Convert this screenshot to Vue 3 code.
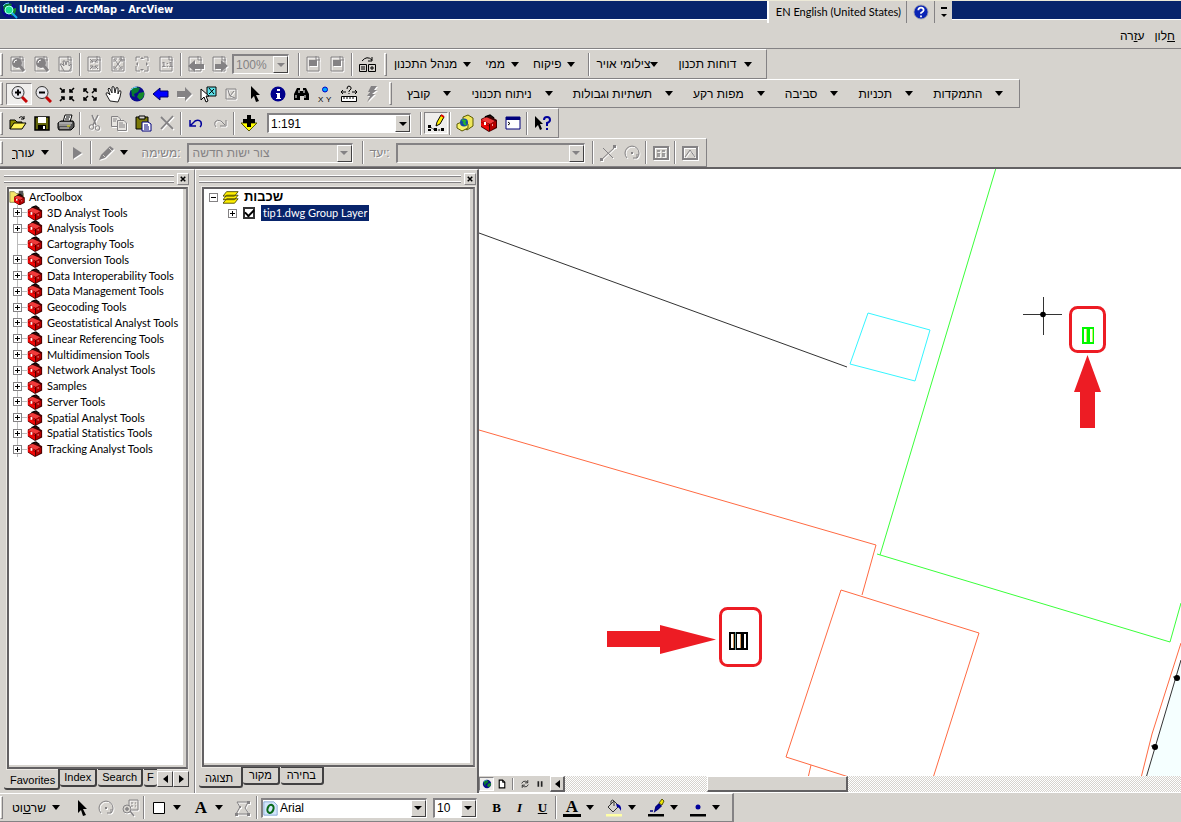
<script setup>
import { ref } from 'vue'

const page = '<path d="M2 2H14V16H2Z" fill="none" stroke="#848284"/><path d="M11 1V5H15" fill="none" stroke="#848284"/>'
const toolbox = '<path d="M1 5L9 1L17 6V14L9 18L1 13Z" fill="#420000"/><path d="M1 6L6 3L15 7L10 10Z" fill="#f03a3a"/><path d="M1 6L9 10V17L1 12Z" fill="#f00808"/><path d="M10 10L16 7V13L10 17Z" fill="#b50000"/><path d="M5 3L10 1L14 4" fill="none" stroke="#000" stroke-width="1.5"/><path d="M1 8L9 12" stroke="#a00000" fill="none"/><path d="M4 8H6V11H4Z" fill="#fff"/><path d="M12 10H13V12H12Z" fill="#f0a0a0"/>'
const globe = '<circle cx="9" cy="9" r="7.5" fill="#0a0a8c"/><path d="M3 4Q8 1 12 3L10 7L6 9L7 12L4 11Z" fill="#087a30"/><path d="M11 8L16 7Q17 12 12 15L9 12Z" fill="#148a28"/><path d="M3 5Q5 2 9 2" stroke="#6ad0ff" fill="none"/>'
const lens = (s) => `<circle cx="8" cy="7.5" r="6" fill="#e8e8ec" stroke="#333"/><path d="M5 7.5H11${s}" stroke="#000" stroke-width="2"/><path d="M12 12L17 17" stroke="#c60808" stroke-width="3"/>`
const pageLens = page + '<circle cx="8" cy="8" r="5" fill="#848284"/><path d="M5 8Q5 5 8 5" stroke="#fff" fill="none"/><path d="M11 11L15 16" stroke="#848284" stroke-width="3"/>'
const hand = '<path d="M5 16L1 9Q1 7 3 8L5 10L3 4Q4 2 5 4L7 8L7 2Q8 1 9 2L10 8L11 3Q12 2 13 3L13 9L14 6Q16 5 16 7L15 12L13 17Z" fill="#fff" stroke="#222"/>'

const icons = {
  pageLens,
  pageHand: page + '<path d="M6 14L3 9L5 9L7 11L6 6L8 6L9 10L10 6L12 7V11L14 9V13L12 16H7Z" fill="#e8e6e2" stroke="#848284"/>',
  pageIn: page + '<path d="M4 4L7 7M12 4L9 7M4 14L7 11M12 14L9 11M7 4V7H4M9 4V7H12M7 14V11H4M9 14V11H12" stroke="#848284" fill="none"/>',
  pageOut: page + '<path d="M5 5L11 13M11 5L5 13M4 7V4H7M9 4H12V7M4 11V14H7M9 14H12V11" stroke="#848284" fill="none"/>',
  pageAll: '<path d="M2 6V2H6M10 2H14V6M14 11V16H10M6 16H2V11" stroke="#848284" fill="none"/><path d="M8 2L6 4H10ZM8 16L6 14H10ZM2 9L4 7V11ZM14 9L12 7V11Z" fill="#848284"/>',
  page11: page + '<text x="3.5" y="12" font-size="8" font-weight="bold" font-family="Liberation Sans, sans-serif" fill="#848284">1:1</text>',
  pagePrev: page + '<path d="M1 11L8 5V9H17V14H8V17Z" fill="#848284"/>',
  pageNext: page + '<path d="M17 11L10 5V9H4V14H10V17Z" fill="#848284"/>',
  layoutA: page + '<path d="M4 5H12V11H4Z" fill="#848284"/>',
  frames: '<path d="M1.5 9.5H8.5V16.5H1.5ZM10.5 9.5H17.5V16.5H10.5Z" fill="none" stroke="#000"/><path d="M3 12H7M3 14H7M13 12H15V14H13ZM4 6Q9 0 14 5M14 2V6H10" stroke="#000" fill="none"/>',
  zoomIn: lens('M8 4.5V10.5'),
  zoomOut: lens(''),
  fixIn: '<path d="M2 3L6 7M6 4V7H3M16 3L12 7M12 4V7H15M2 16L6 12M6 15V12H3M16 16L12 12M12 15V12H15" stroke="#000" stroke-width="1.6" fill="none"/>',
  fixOut: '<path d="M7 8L3 4M3 7V4H6M11 8L15 4M15 7V4H12M7 11L3 15M3 12V15H6M11 11L15 15M15 12V15H12" stroke="#000" stroke-width="1.5" fill="none"/>',
  hand,
  globe,
  back: '<path d="M1 9L8 3V6H16V12H8V15Z" fill="#0000ff" stroke="#00006b"/>',
  forward: '<path d="M17 9L10 2V6H2V12H10V16Z" fill="#848284"/>',
  pick: '<path d="M8 2H17V11H8Z" fill="#5ee0e8" stroke="#000"/><path d="M10 3L15 9M10 9L15 4" stroke="#000"/><path d="M2 4V15L5 12L7 17L9 16L7 11H10Z" fill="#fff" stroke="#000"/>',
  clearPick: '<path d="M4 4H14V14H4Z" fill="none" stroke="#848284"/><path d="M6 5L8 11L12 6M8 11L13 13" stroke="#848284" fill="none"/>',
  cursor: '<path d="M5 1V14L8 11L10 17L13 16L10 10H14Z" fill="#000"/>',
  info: '<circle cx="9" cy="9" r="7.5" fill="#00008c"/><path d="M8 4H11V6H8ZM7 8H11V13H12V14H7V13H8V9H7Z" fill="#fff"/>',
  find: '<path d="M4 3H7V6H10V3H13L16 9V15H11V11H7V15H1V9Z" fill="#000"/><path d="M3 10V13M12 10V13M6 5V8M11 5V8" stroke="#fff"/>',
  xy: '<circle cx="9" cy="4.500" r="2.500" fill="#00a5ff" stroke="#0000c6"/><text x="2" y="17" font-size="8" font-family="Liberation Sans, sans-serif" fill="#000">X</text><text x="10" y="17" font-size="8" font-family="Liberation Sans, sans-serif" fill="#000">Y</text>',
  measure: '<path d="M1.500 11.500H16.500V16.500H1.500Z" fill="#fff" stroke="#000"/><path d="M4 12V14M7 12V14M10 12V14M13 12V14M1 7H6M12 7H17M3 5L1 7L3 9M15 5L17 7L15 9M7 4Q7 1 9 1Q12 2 11 4L9 6V7M9 8V9" stroke="#000" fill="none"/>',
  bolt: '<path d="M8 1H14L11 5H14L9 9H12L4 17L7 11H4L7 7H5Z" fill="#848284"/>',
  open: '<path d="M1 15V6H6L8 8H13V10" fill="#8c8a00" stroke="#000"/><path d="M1 15L5 9H17L13 15Z" fill="#fff35a" stroke="#000"/><path d="M10 4Q13 1 15 5M15 2V5H12" stroke="#000" fill="none"/>',
  save: '<path d="M2 3H16V16H2Z" fill="#63650a" stroke="#000" stroke-width="1.500"/><path d="M5 3H13V9H5Z" fill="#fff"/><path d="M5 11H13V16H5Z" fill="#000"/><path d="M10 12H12V15H10Z" fill="#fff"/>',
  print: '<path d="M6 8L8 1H15L13 8Z" fill="#fff" stroke="#000"/><path d="M9 3H13M8 5H12" stroke="#000"/><path d="M1 9L4 7H16L17 9V13L14 16H2L1 14Z" fill="#555" stroke="#000"/><path d="M2 11H14M3 14H12" stroke="#d6d3ce"/><path d="M10 12H13" stroke="#e7e700"/><path d="M2 9H15" stroke="#fff"/>',
  cut: '<path d="M6 1L10 11M12 1L7 11" stroke="#848284" stroke-width="1.500"/><circle cx="5.500" cy="13" r="2.300" stroke="#848284" fill="none"/><circle cx="11.500" cy="14" r="2.300" stroke="#848284" fill="none"/>',
  copy: '<path d="M1.500 2.500H8L10.500 5V12.500H1.500Z" fill="#e7e5e1" stroke="#848284"/><path d="M7.500 6.500H14L16.500 9V16.500H7.500Z" fill="#e7e5e1" stroke="#848284"/><path d="M3 5H7M3 7H6M9 9H13M9 11H15M9 13H15" stroke="#848284"/>',
  paste: '<path d="M2 3H14V15H2Z" fill="#7b7908" stroke="#000"/><path d="M5 2H11V5H5Z" fill="#d6d3ce" stroke="#000"/><path d="M8 8H14L17 10V17H8Z" fill="#fff" stroke="#00007b"/><path d="M10 11H14M10 13H15M10 15H15" stroke="#00007b"/>',
  remove: '<path d="M3 3L15 15M15 2L3 15" stroke="#848284" stroke-width="1.800"/>',
  undo: '<path d="M3 6V12H9M4 11L8 7Q12 5 14 8Q15 11 13 13" fill="none" stroke="#00009c" stroke-width="1.500"/>',
  redo: '<path d="M15 6V12H9M14 11L10 7Q6 5 4 8Q3 11 5 13" fill="none" stroke="#848284"/>',
  addData: '<path d="M9 17L1 9H17Z" fill="#ffff00" stroke="#5a5800"/><path d="M7 1H11V5H15V9H11V13H7V9H3V5H7Z" fill="#000"/>',
  sketch: '<path d="M1 11H4V14H1ZM1 15H4V17H1ZM7 14H10V17H7ZM14 14H17V17H14Z" fill="#000"/><path d="M3 13L8 16H15" stroke="#000" stroke-dasharray="2 1" fill="none"/><path d="M9 12L10 8L14 1L17 3L13 10Z" fill="#ffef00" stroke="#000"/><path d="M14 1L17 3" stroke="#e00000" stroke-width="2"/>',
  catalog: '<path d="M7 3L12 1L17 4V12L11 16L7 13Z" fill="#efe75a" stroke="#5a5800"/><path d="M1 10L8 7L12 10V14L6 17L1 14Z" fill="#f7f36b" stroke="#5a5800"/><circle cx="8" cy="8.500" r="4" fill="#164aa5"/><path d="M6 6L9 7L8 9L10 11" stroke="#29b529" stroke-width="2" fill="none"/>',
  toolbox,
  command: '<path d="M2 3H16V15H2Z" fill="#fff" stroke="#00007b"/><path d="M2 3H16V6H2Z" fill="#00007b"/><path d="M4 8L6 9.500L4 11" stroke="#000" fill="none"/>',
  whatsThis: '<path d="M2 2V14L5 11L7 16L9 15L7 10H10Z" fill="#000"/><path d="M11 6Q11 3 14 3Q17 3 17 6Q17 8 14 9V12M14 14V16" stroke="#00009c" stroke-width="2" fill="none"/>',
  editArrow: '<path d="M5 3V15L14 9Z" fill="#848284"/>',
  pencil: '<path d="M2 16L4 11L13 2L17 5L8 14Z" fill="#848284"/><path d="M6 11L8 13M12 4L15 7" stroke="#d6d3ce"/>',
  split: '<path d="M3 15L15 4M4 4L14 14" stroke="#848284"/><path d="M1 14H4V17H1ZM14 1H17V4H14Z" fill="#848284"/>',
  rotate: '<path d="M4 14A7 7 0 1 1 14 14M14 10V14H10" fill="none" stroke="#848284"/><path d="M8 8H10V10H8Z" fill="#848284"/>',
  table: '<path d="M2 3H16V15H2Z" fill="none" stroke="#848284" stroke-width="2"/><path d="M5 7H8M10 7H13M5 10H8M10 10H13M5 12H8M10 12H13" stroke="#848284" stroke-width="1.500"/>',
  sketchProps: '<path d="M2 3H16V15H2Z" fill="none" stroke="#848284" stroke-width="2"/><path d="M4 13L9 6L14 13" stroke="#848284" fill="none"/>',
  zoomSel: '<path d="M8 1H17V11H8ZM10 4H12M14 4H15M10 7H12M14 7H15" fill="none" stroke="#848284"/><circle cx="6" cy="10" r="4" fill="#d6d3ce" stroke="#848284"/><path d="M4 10H8M6 8V12M9 12L13 17" stroke="#848284" stroke-width="1.500"/>',
  box: '<path d="M3.500 3.500H14.500V14.500H3.500Z" fill="#fff" stroke="#000"/>',
  vertices: '<path d="M2 15L6 8L3 3L14 3L11 9L15 15Z" fill="none" stroke="#848284"/><path d="M1 14H4V17H1ZM13 2H16V5H13ZM13 14H16V17H13ZM5 7H7V9H5Z" fill="#848284"/>',
  bucket: '<path d="M3 8L9 2L14 7L8 13Z" fill="#d6d3ce" stroke="#333"/><path d="M6 5V2Q8 0 9 2V7" stroke="#333" fill="none"/><path d="M11 5Q17 5 16 12Q14 8 12 8Z" fill="#00009c"/><path d="M1 15H17V17.500H1Z" fill="#ffffa5"/>',
  brush: '<path d="M3 12H6M8 12L9 8L12 5L14 7L11 10Z" fill="#0000a5" stroke="#00007b" stroke-width="1.500"/><path d="M12 4L15 0L17 2L15 6Z" fill="#efe708" stroke="#5a5800"/><path d="M1 15H17V17.500H1Z" fill="#000"/>',
  dot: '<circle cx="9" cy="8" r="2.500" fill="#00009c"/><path d="M1 15H17V17.500H1Z" fill="#000"/>',
  layers: '<path d="M4 11H17L13 16H0ZM4 7H17L13 12H0ZM4 3H17L13 8H0Z" fill="#ffef00" stroke="#4a4800"/>',
  root: '<path d="M1 3H6L8 5H16V15H1Z" fill="#f5e66a" stroke="#8c8a50"/><path d="M11 2H16V8H11Z" fill="#555"/><g transform="translate(5 5) scale(.75)">' + toolbox + '</g>',
  app: globe + '<circle cx="9" cy="9" r="4" fill="#19e08c" stroke="#a6fff0"/><path d="M12 12L17 17" stroke="#18aef0" stroke-width="2"/>',
  help: '<circle cx="9" cy="9" r="8" fill="#0a24b5" stroke="#b0b0b0"/><path d="M6 7Q6 4 9 4Q12 4 12 7Q12 8 9 10V11M9 13V15" stroke="#fff" stroke-width="2" fill="none"/>',
  doc: '<path d="M4 2H10L14 6V16H4Z" fill="#fff" stroke="#000" stroke-width="2"/><path d="M10 2V6H14" fill="none" stroke="#000" stroke-width="1.500"/>',
  refresh: '<path d="M3 8Q5 3 10 4L14 6M14 2V7H9M15 10Q13 15 8 14L4 12M4 16V11H9" stroke="#222" stroke-width="1.500" fill="none"/>',
  pause: '<path d="M6 4V14M12 4V14" stroke="#222" stroke-width="3"/>',
  fontO: '<path d="M1 1H13L17 5V17H1Z" fill="#d3e6fb" stroke="#7ba0d0"/><ellipse cx="9" cy="9.500" rx="3.500" ry="5" transform="rotate(20 9 9.500)" fill="none" stroke="#086a18" stroke-width="2.500"/>'
}

const layoutGroups = [
  [['pageLens', 'Page zoom in'], ['pageLens', 'Page zoom out'], ['pageHand', 'Page pan']],
  [['pageIn', 'Page fixed zoom in'], ['pageOut', 'Page fixed zoom out'], ['pageAll', 'Whole page'], ['page11', 'Zoom to 100%']],
  [['pagePrev', 'Previous page extent'], ['pageNext', 'Next page extent']]
]
const planMenus = ['מנהל התכנון', 'ממי', 'פיקוח']
const reportMenus = ['צילומי אויר', 'דוחות תכנון']
const tools = [
  ['zoomIn', 'Zoom in'], ['zoomOut', 'Zoom out'], ['fixIn', 'Fixed zoom in'], ['fixOut', 'Fixed zoom out'],
  ['hand', 'Pan'], ['globe', 'Full extent'], ['back', 'Previous extent'], ['forward', 'Next extent'],
  ['pick', 'Select features'], ['clearPick', 'Clear selection'], ['cursor', 'Select elements'], ['info', 'Identify'],
  ['find', 'Find'], ['xy', 'Go to XY'], ['measure', 'Measure'], ['bolt', 'Hyperlink']
]
const grey = ['forward', 'clearPick', 'bolt', 'cut', 'copy', 'remove', 'redo']
const dataMenus = ['קובץ', 'ניתוח תכנוני', 'תשתיות וגבולות', 'מפות רקע', 'סביבה', 'תכניות', 'התמקדות']
const fileGroups = [
  [['open', 'Open'], ['save', 'Save'], ['print', 'Print']],
  [['cut', 'Cut'], ['copy', 'Copy'], ['paste', 'Paste'], ['remove', 'Delete']],
  [['undo', 'Undo'], ['redo', 'Redo']]
]
const toolsets = [
  '3D Analyst Tools', 'Analysis Tools', 'Cartography Tools', 'Conversion Tools', 'Data Interoperability Tools',
  'Data Management Tools', 'Geocoding Tools', 'Geostatistical Analyst Tools', 'Linear Referencing Tools',
  'Multidimension Tools', 'Network Analyst Tools', 'Samples', 'Server Tools', 'Spatial Analyst Tools',
  'Spatial Statistics Tools', 'Tracking Analyst Tools'
]
const colorTools = [['bucket', 'Fill color'], ['brush', 'Line color'], ['dot', 'Marker color']]
const layerOn = ref(true)
</script>

<template>
  <div class="app">
    <header class="title">
      <svg class="ic" viewBox="0 0 18 18" v-html="icons.app"></svg>
      <h1>Untitled - ArcMap - ArcView</h1>
      <div class="lang">
        <button class="langname">EN English (United States)</button>
        <button class="langhelp" aria-label="Help"><svg class="ic" viewBox="0 0 18 18" v-html="icons.help"></svg></button>
        <button class="langopt" aria-label="Options"><i class="dash"></i><i class="tri small"></i></button>
      </div>
    </header>
    <nav class="menu">
      <button><u>ח</u>לון</button>
      <button>ע<u>ז</u>רה</button>
    </nav>

    <div class="bar bar1">
      <i class="grip"></i>
      <template v-for="(g, n) in layoutGroups" :key="n">
        <i v-if="n" class="sep"></i>
        <div class="group off">
          <button v-for="b in g" :key="b[1]" class="tool" :aria-label="b[1]"><svg class="ic" viewBox="0 0 18 18" v-html="icons[b[0]]"></svg></button>
        </div>
      </template>
      <div class="combo dim zoom"><select aria-label="Page zoom"><option>100%</option></select><i class="drop"></i></div>
      <i class="sep wide"></i>
      <div class="group off">
        <button class="tool" aria-label="Toggle draft mode"><svg class="ic" viewBox="0 0 18 18" v-html="icons.layoutA"></svg></button>
        <button class="tool" aria-label="Focus data frame"><svg class="ic" viewBox="0 0 18 18" v-html="icons.layoutA"></svg></button>
      </div>
      <i class="sep"></i>
      <button class="tool" aria-label="Change layout"><svg class="ic" viewBox="0 0 18 18" v-html="icons.frames"></svg></button>
      <i class="grip inner"></i>
      <div class="menus tight">
        <button v-for="m in planMenus" :key="m">{{ m }}<i class="tri"></i></button>
      </div>
      <i class="sep"></i>
      <div class="menus reports">
        <button v-for="m in reportMenus" :key="m">{{ m }}<i class="tri"></i></button>
      </div>
    </div>

    <div class="bar bar2">
      <i class="grip"></i>
      <div class="group even">
        <button v-for="(b, n) in tools" :key="b[1]" class="tool" :class="{ pressed: n === 0, off: grey.includes(b[0]) }" :aria-label="b[1]"><svg class="ic" viewBox="0 0 18 18" v-html="icons[b[0]]"></svg></button>
      </div>
      <i class="grip inner"></i>
      <div class="menus roomy">
        <button v-for="m in dataMenus" :key="m">{{ m }}<i class="tri"></i></button>
      </div>
    </div>

    <div class="bar bar3">
      <i class="grip"></i>
      <template v-for="(g, n) in fileGroups" :key="n">
        <i v-if="n" class="sep"></i>
        <div class="group">
          <button v-for="b in g" :key="b[1]" class="tool" :class="{ off: grey.includes(b[0]) }" :aria-label="b[1]"><svg class="ic" viewBox="0 0 18 18" v-html="icons[b[0]]"></svg></button>
        </div>
      </template>
      <i class="sep"></i>
      <button class="tool" aria-label="Add data"><svg class="ic" viewBox="0 0 18 18" v-html="icons.addData"></svg></button>
      <div class="combo scale"><select aria-label="Map scale"><option>1:191</option></select><i class="drop"></i></div>
      <i class="sep wide"></i>
      <button class="tool pressed" aria-label="Editor toolbar"><svg class="ic" viewBox="0 0 18 18" v-html="icons.sketch"></svg></button>
      <i class="sep"></i>
      <div class="group">
        <button class="tool" aria-label="ArcCatalog"><svg class="ic" viewBox="0 0 18 18" v-html="icons.catalog"></svg></button>
        <button class="tool" aria-label="ArcToolbox"><svg class="ic" viewBox="0 0 18 18" v-html="icons.toolbox"></svg></button>
        <button class="tool" aria-label="Command line"><svg class="ic" viewBox="0 0 18 18" v-html="icons.command"></svg></button>
      </div>
      <i class="sep"></i>
      <button class="tool" aria-label="What's this"><svg class="ic" viewBox="0 0 18 18" v-html="icons.whatsThis"></svg></button>
    </div>

    <div class="bar bar4">
      <i class="grip"></i>
      <div class="menus word edit"><button><span>עור<u>ך</u></span><i class="tri"></i></button></div>
      <i class="sep wide"></i>
      <button class="tool off" aria-label="Edit tool"><svg class="ic" viewBox="0 0 18 18" v-html="icons.editArrow"></svg></button>
      <i class="sep"></i>
      <button class="tool off" aria-label="Sketch tool"><svg class="ic" viewBox="0 0 18 18" v-html="icons.pencil"></svg></button>
      <button class="arrow" aria-label="Sketch tools"><i class="tri"></i></button>
      <label class="dimlabel" for="task">משימה:</label>
      <div class="combo dim task"><select id="task"><option>צור ישות חדשה</option></select><i class="drop"></i></div>
      <i class="sep wide"></i>
      <label class="dimlabel" for="target">יעד:</label>
      <div class="combo dim target"><select id="target"><option></option></select><i class="drop"></i></div>
      <i class="sep wide"></i>
      <div class="group off">
        <button class="tool" aria-label="Split"><svg class="ic" viewBox="0 0 18 18" v-html="icons.split"></svg></button>
        <button class="tool" aria-label="Rotate"><svg class="ic" viewBox="0 0 18 18" v-html="icons.rotate"></svg></button>
      </div>
      <i class="sep"></i>
      <button class="tool off" aria-label="Attributes"><svg class="ic" viewBox="0 0 18 18" v-html="icons.table"></svg></button>
      <i class="sep"></i>
      <button class="tool off" aria-label="Sketch properties"><svg class="ic" viewBox="0 0 18 18" v-html="icons.sketchProps"></svg></button>
    </div>

    <main class="work">
      <section class="panel toolboxes">
        <div class="head"><i class="rails"></i><button class="close" aria-label="Close toolbox"><svg viewBox="0 0 8 8"><path d="M1 1L7 7M7 1L1 7" /></svg></button></div>
        <div class="well">
          <ul class="tree">
            <li class="root"><svg class="ic" viewBox="0 0 18 18" v-html="icons.root"></svg>ArcToolbox</li>
            <li v-for="t in toolsets" :key="t">
              <span class="node"><button v-if="t !== 'Cartography Tools'" class="plus" :aria-label="'Expand ' + t"></button></span>
              <svg class="ic" viewBox="0 0 18 18" v-html="icons.toolbox"></svg>{{ t }}
            </li>
          </ul>
        </div>
        <div class="tabs">
          <button class="on">Favorites</button><button>Index</button><button>Search</button><button class="cut">F</button>
          <button class="nudge" aria-label="Scroll tabs left"><i class="tri left"></i></button>
          <button class="nudge" aria-label="Scroll tabs right"><i class="tri right"></i></button>
        </div>
      </section>

      <section class="panel contents">
        <div class="head"><i class="rails"></i><button class="close" aria-label="Close contents"><svg viewBox="0 0 8 8"><path d="M1 1L7 7M7 1L1 7" /></svg></button></div>
        <div class="well">
          <div class="frame"><button class="plus minus" aria-label="Collapse"></button><svg class="ic" viewBox="0 0 18 18" v-html="icons.layers"></svg><b>שכבות</b></div>
          <div class="layer"><button class="plus" aria-label="Expand layer"></button><input id="lyr" v-model="layerOn" type="checkbox" /><label for="lyr">tip1.dwg Group Layer</label></div>
        </div>
        <div class="tabs he">
          <button class="on">תצוגה</button><button>מקור</button><button>בחירה</button>
        </div>
      </section>

      <section class="view">
        <svg class="map" role="img" aria-label="Map">
          <g transform="translate(-479 -169)" fill="none">
            <path d="M1181 660L1146 777H1181Z" fill="#f5ffff" />
            <path d="M479 233L847 367" stroke="#333" />
            <path d="M868 313L930 330L915 381L850 364Z" stroke="#35f5ff" />
            <g stroke="#3aff3a"><path d="M996 168L880 555" /><path d="M877 554L1170 642L1181 603" /></g>
            <g stroke="#ff6a42">
              <path d="M479 430L876 545L862 595" />
              <path d="M933 778L979 633L841 590L786 757L852 778" />
              <path d="M811 765L808 778" />
              <path d="M1181 643L1152 734L1141 778" />
            </g>
            <path d="M1181 660L1146 778" stroke="#333" />
            <path d="M1173 677H1177M1151 746H1155" stroke="#333" />
            <circle cx="1177" cy="678" r="3" fill="#000" /><circle cx="1155" cy="747" r="3" fill="#000" />
            <path d="M1023 314.500H1062M1043.500 297V335" stroke="#333" />
            <circle cx="1043" cy="314.500" r="2.800" fill="#000" />
            <g shape-rendering="crispEdges">
              <path d="M1082 327H1094V344H1082Z" fill="#00f700" />
              <path d="M1084 329H1086V342H1084ZM1090 329H1092V342H1090Z" fill="#fff" />
              <path d="M1086 329H1087V342H1086ZM1092 329H1093V342H1092Z" fill="#c8f75a" />
              <path d="M729 632H748V650H729Z" fill="#000" />
              <path d="M731 634H733V648H731ZM737 634H740V648H737ZM744 634H746V648H744Z" fill="#fff" />
              <path d="M733 634H734V648H733ZM740 634H741V648H740Z" fill="#d69a5a" />
              <path d="M735 632H736V650H735Z" fill="#6b9a94" />
            </g>
            <rect x="1070.500" y="307.500" width="34" height="44" rx="7" stroke="#ed1c24" stroke-width="3" />
            <rect x="720.500" y="608.500" width="40" height="57" rx="7" stroke="#ed1c24" stroke-width="3" />
            <path d="M1087.500 355L1101 392H1095V428H1080V392H1074Z" fill="#ed1c24" />
            <path d="M607 631H660V625L716 639.500L660 654V647H607Z" fill="#ed1c24" />
          </g>
        </svg>
        <div class="status">
          <button class="pressed" aria-label="Data view"><svg viewBox="0 0 18 18" v-html="icons.globe"></svg></button>
          <button aria-label="Layout view"><svg viewBox="0 0 18 18" v-html="icons.doc"></svg></button>
          <i class="sep"></i>
          <button aria-label="Refresh"><svg viewBox="0 0 18 18" v-html="icons.refresh"></svg></button>
          <button aria-label="Pause drawing"><svg viewBox="0 0 18 18" v-html="icons.pause"></svg></button>
          <button class="scrollbtn" aria-label="Scroll left"><i class="tri left"></i></button>
          <div class="track"><div class="thumb"></div></div>
        </div>
      </section>
    </main>

    <footer class="bar draw">
      <i class="grip"></i>
      <div class="menus word"><button><span>שר<u>ט</u>וט</span><i class="tri"></i></button></div>
      <div class="group first">
        <button class="tool" aria-label="Select elements"><svg class="ic" viewBox="0 0 18 18" v-html="icons.cursor"></svg></button>
        <button class="tool off" aria-label="Rotate element"><svg class="ic" viewBox="0 0 18 18" v-html="icons.rotate"></svg></button>
        <button class="tool off" aria-label="Zoom to selected"><svg class="ic" viewBox="0 0 18 18" v-html="icons.zoomSel"></svg></button>
      </div>
      <i class="sep"></i>
      <button class="tool" aria-label="Rectangle"><svg class="ic" viewBox="0 0 18 18" v-html="icons.box"></svg></button>
      <button class="arrow" aria-label="Shapes"><i class="tri"></i></button>
      <button class="tool serif big" aria-label="Text">A</button>
      <button class="arrow" aria-label="Text tools"><i class="tri"></i></button>
      <button class="tool off" aria-label="Edit vertices"><svg class="ic" viewBox="0 0 18 18" v-html="icons.vertices"></svg></button>
      <i class="sep"></i>
      <div class="combo font"><svg class="ic" viewBox="0 0 18 18" v-html="icons.fontO"></svg><select aria-label="Font"><option>Arial</option></select><i class="drop"></i></div>
      <div class="combo size"><select aria-label="Font size"><option>10</option></select><i class="drop"></i></div>
      <div class="group styles">
        <button class="tool serif">B</button>
        <button class="tool serif"><em>I</em></button>
        <button class="tool serif"><u>U</u></button>
      </div>
      <i class="sep"></i>
      <button class="tool serif colored" aria-label="Font color">A</button>
      <button class="arrow" aria-label="Font colors"><i class="tri"></i></button>
      <template v-for="c in colorTools" :key="c[0]">
        <button class="tool" :aria-label="c[1]"><svg class="ic" viewBox="0 0 18 18" v-html="icons[c[0]]"></svg></button>
        <button class="arrow" :aria-label="c[1] + ' palette'"><i class="tri"></i></button>
      </template>
    </footer>
  </div>
</template>

<style>
body { margin: 0; background: #d6d3ce; }
</style>

<style scoped>
.app {
  min-height: 100vh; display: flex; flex-direction: column; overflow: hidden; color: #000; background: #d6d3ce;
  font: 11px/14px "DejaVu Sans Condensed", "DejaVu Sans", sans-serif;
}
.app * { box-sizing: border-box; }
button { border: 0; padding: 0; margin: 0; background: none; font: inherit; color: inherit; flex: none; }
svg { display: block; flex: none; }
.ic { width: 18px; height: 18px; }
i { flex: none; }
.tri { width: 0; height: 0; border: 4px solid transparent; border-top: 5px solid #000; border-bottom: 0; }
.tri.small { border-width: 3px 3px 0; }
.tri.left { border: 4px solid transparent; border-right: 5px solid #000; border-left: 0; }
.tri.right { border: 4px solid transparent; border-left: 5px solid #000; border-right: 0; }

.title { position: relative; height: 19px; display: flex; align-items: center; gap: 1px; background: #08246b; border-top: 1px solid #ece9d8; flex: none; }
h1 { margin: 0; font-size: 11px; font-weight: bold; color: #fff; }
.lang { position: absolute; right: 229px; top: 0; height: 22px; display: flex; background: #d6d3ce; border-left: 2px solid #fff; font-family: Lato, sans-serif; font-variant-ligatures: none; }
.lang button { display: flex; align-items: center; justify-content: center; border-right: 1px solid #848284; }
.langname { padding: 0 5px 0 7px; }
.lang .langhelp { width: 28px; }
.lang .langopt { width: 17px; flex-direction: column; gap: 5px; border: 0; }
.lang .ic { width: 16px; height: 16px; }
.dash { width: 6px; height: 2px; background: #000; }

.menu { height: 30px; display: flex; flex: none; direction: rtl; align-items: center; gap: 10px; padding: 4px 6px 0; border-top: 1px solid #fff; border-bottom: 1px solid #848284; box-shadow: 0 -2px #d6d3ce; font-family: "Liberation Sans", sans-serif; font-size: 12px; }

.bar { display: flex; align-items: center; align-self: flex-start; flex: none; height: 29px; border: 1px solid #848284; border-top-color: #fff; border-left: 0; font-size: 12px; }
.bar1, .bar3 { height: 30px; }
.grip { width: 3px; height: 23px; margin-right: 3px; border: 1px solid #fff; border-right-color: #848284; border-bottom-color: #848284; }
.grip.inner { margin: 0 5px; }
.sep { width: 2px; height: 23px; margin: 0 2px 0 1px; border-left: 1px solid #848284; border-right: 1px solid #fff; }
.sep.wide { margin-left: 9px; }
.target + .sep.wide { margin-left: 7px; }
.group { display: flex; flex: none; }
.tool { width: 24px; height: 22px; display: flex; align-items: center; justify-content: center; }
.even { width: 378px; }
.even .tool { flex: 1; }
.off svg { filter: drop-shadow(1px 1px 0 #fff); }
.pressed { background: #efeeec; border: 1px solid #848284; border-right-color: #fff; border-bottom-color: #fff; }
.menus { display: flex; font-family: "Liberation Sans", sans-serif; }
.menus button { display: flex; align-items: center; gap: 6px; }
.tight { gap: 14px; padding: 0 12px 0 2px; }
.tight + .sep + .reports { gap: 20px; padding: 0 10px 0 4px; }
.reports button { gap: 8px; }
.reports button:first-child { gap: 0; }
.roomy { gap: 20px; padding: 0 16px 0 10px; }
.roomy button { gap: 13px; }
.word { padding-left: 6px; }
.word button { gap: 6px; }
.edit { padding-right: 3px; }
.arrow { width: 13px; height: 22px; display: flex; align-items: center; justify-content: center; }

.combo { display: flex; align-items: center; height: 20px; background: #fff; border: 2px solid #848284; border-right: 1px solid #fff; border-bottom: 1px solid #fff; }
.combo select { appearance: none; border: 0; outline: 0; padding: 0 2px; margin: 0; flex: 1; min-width: 0; height: 100%; background: none; color: #000; font: 12px/16px "Liberation Sans", sans-serif; border-radius: 0; }
.drop { width: 15px; height: 100%; background: #d6d3ce; border: 1px solid #fff; border-right-color: #424142; border-bottom-color: #424142; display: flex; align-items: center; justify-content: center; }
.drop::after { content: ""; border: 4px solid transparent; border-top-color: #000; border-bottom: 0; }
.dim { background: none; }
.dim select { color: #848284; }
.dim .drop::after { border-top-color: #848284; }
.dimlabel { color: #848284; text-shadow: 1px 1px #fff; font: 12px/16px "Liberation Sans", sans-serif; }
.zoom { width: 57px; }
.scale { width: 144px; margin-left: 6px; }
.task { width: 166px; margin-left: 6px; }
.task select { padding-left: 4px; }
.target { width: 189px; margin-left: 6px; }
.bar4 .arrow + .dimlabel { margin-left: 11px; }
.bar4 .wide + .dimlabel { margin-left: 4px; }
.bar1, .bar3, .bar4 { padding-right: 4px; }

.work { flex: 1; display: flex; min-height: 0; border-top: 2px solid #636163; }
.panel { display: flex; flex-direction: column; flex: none; border-top: 1px solid #fff; border-right: 1px solid #848284; }
.toolboxes { width: 195px; padding: 0 5px 3px 4px; }
.contents { width: 284px; padding: 0 1px 5px 3px; border-left: 1px solid #fff; border-right: 2px solid #636163; }
.head { display: flex; align-items: center; height: 16px; gap: 3px; flex: none; }
.rails { flex: 1; height: 7px; margin-top: 1px; border: solid #fff; border-width: 1px 0; box-shadow: inset 0 1px #848284, 0 1px #848284; }
.close { width: 12px; height: 12px; margin-top: 1px; padding: 2px; border: 1px solid #fff; border-right-color: #848284; border-bottom-color: #848284; }
.close path { stroke: #000; stroke-width: 2; }
.well { flex: 1; min-height: 0; background: #fff; border: 2px solid #636163; border-right-color: #848284; box-shadow: inset -3px -2px #d6d3ce, 0 0 0 1px #ece9e4; margin: 1px 1px 0 3px; }
.tree { list-style: none; margin: 0; padding: 0; height: 268px; display: grid; grid-auto-rows: 1fr; font: 11px/14px Lato, sans-serif; font-variant-ligatures: none; }
.tree li { display: flex; align-items: center; gap: 4px; white-space: nowrap; min-height: 0; }
.tree .ic { width: 16px; height: 16px; }
.node { width: 18px; height: 100%; margin-right: -4px; padding-left: 4px; display: flex; align-items: center; flex: none; background: linear-gradient(#bbb, #bbb) 8px 0 / 1px 100% no-repeat, linear-gradient(#bbb, #bbb) 9px 50% / 9px 1px no-repeat; }
.plus { width: 9px; height: 9px; border: 1px solid #848284; background: linear-gradient(#000, #000) 1px 3px / 5px 1px no-repeat, linear-gradient(#000, #000) 3px 1px / 1px 5px no-repeat, #fff; }
.minus { background: linear-gradient(#000, #000) 1px 3px / 5px 1px no-repeat, #fff; }
.frame { display: flex; align-items: center; height: 16px; gap: 5px; padding-left: 5px; font: bold 13px/16px "Liberation Sans", sans-serif; }
.frame .ic { width: 16px; height: 16px; }
.layer { display: flex; align-items: center; height: 16px; padding-left: 24px; gap: 6px; font: 11px/14px Lato, sans-serif; font-variant-ligatures: none; }
.layer label { background: #08246b; color: #fff; padding: 1px 2px; line-height: 14px; }
.layer input { appearance: none; width: 12px; height: 12px; margin: 0; border: 2px solid #333; background: #fff; display: grid; place-items: center; }
.layer input:checked::after { content: ""; width: 7px; height: 4px; margin-bottom: 2px; border: solid #000; border-width: 0 0 2px 2px; rotate: -45deg; }

.tabs { display: flex; height: 21px; flex: none; align-items: flex-start; font: 11px/15px "Liberation Sans", sans-serif; }
.tabs button { height: 18px; padding: 0 4px; border: solid #424142; border-width: 1px 2px 2px 0; border-radius: 0 0 3px 3px; margin-right: 1px; }
.tabs button.on { height: 21px; padding: 3px 3px 0 6px; border-top: 0; margin-right: 0; }
.tabs button.cut { flex: 1; text-align: left; border-right: 0; margin-right: 0; padding: 0 0 0 3px; }
.tabs .nudge { width: 16px; padding: 0; margin: 2px 0 0; height: 16px; display: flex; align-items: center; justify-content: center; border: 1px solid #fff; border-right-color: #424142; border-bottom-color: #424142; border-radius: 0; }
.he button { padding: 0 6px; }
.he button.on { padding: 3px 8px 0 6px; }

.view { flex: 1; min-width: 0; display: flex; flex-direction: column; background: #fff; }
.map { flex: 1; width: 100%; min-height: 0; }
.status { height: 17px; display: flex; align-items: center; flex: none; background: #d6d3ce; border-bottom: 1px solid #fff; }
.status button { width: 15px; height: 14px; display: flex; align-items: center; justify-content: center; }
.status svg { width: 10px; height: 10px; }
.status .sep { height: 12px; margin: 0 3px; }
.status .scrollbtn { height: 16px; margin-left: 3px; border: 1px solid #fff; border-right: 2px solid #636163; border-bottom: 2px solid #636163; }
.track { flex: 1; height: 16px; background: repeating-conic-gradient(#fff 0 25%, #d6d3ce 0 50%) 0 0 / 2px 2px; }
.thumb { width: 23%; height: 16px; margin-left: 23%; background: #d6d3ce; border: 1px solid #fff; border-right: 2px solid #636163; border-bottom: 2px solid #636163; }

.draw { height: 29px; padding-right: 4px; border-right-width: 2px; }
.draw .first { margin-left: 10px; }
.draw .styles { margin-left: 8px; }
.draw .styles .tool { width: 23px; }
.draw .arrow { width: 12px; margin-right: 6px; }
.serif { font: bold 13px/16px "Liberation Serif", serif; }
.serif.big { font-size: 17px; }
.serif.colored { height: 18px; width: 18px; margin: 0 3px 0 4px; font-size: 17px; line-height: 15px; border-bottom: 3px solid #000; }
.font { width: 166px; margin-left: 1px; }
.font .ic { width: 15px; height: 15px; }
.size { width: 44px; margin-left: 6px; }
</style>
